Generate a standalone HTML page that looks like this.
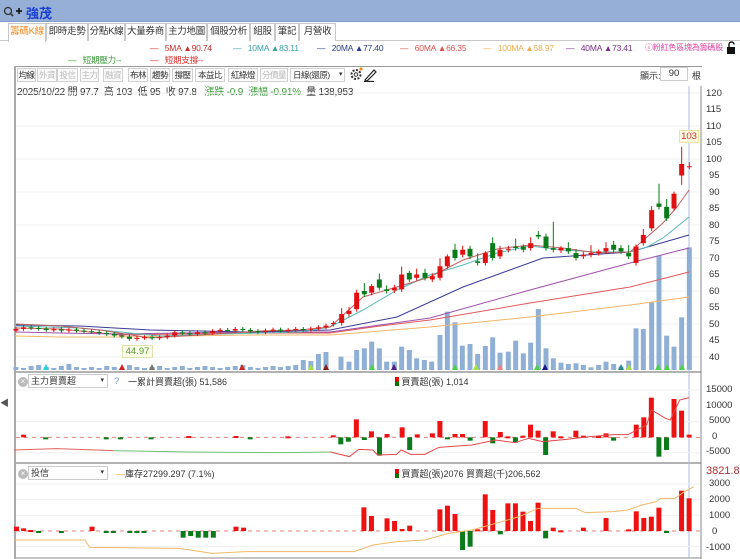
<!DOCTYPE html>
<html><head><meta charset="utf-8">
<style>
*{margin:0;padding:0;box-sizing:border-box}
body{width:740px;height:559px;overflow:hidden;background:#fff;font-family:"Liberation Sans","Noto Sans CJK TC",sans-serif;font-size:11px;color:#333;position:relative}
.a{position:absolute;white-space:nowrap}
.top{left:0;top:0;width:740px;height:22px;background:#95afd7;border-bottom:1px solid #7f9cc8}
.tab{position:absolute;top:23px;height:18px;border:1px solid #c8c8c8;border-bottom:none;font-size:9.5px;line-height:16px;text-align:center;color:#333;background:#fff;white-space:nowrap;overflow:hidden;letter-spacing:-0.3px}
.tb{position:absolute;top:68px;height:14px;border:1px solid #d0d0d0;font-size:8.5px;line-height:12px;text-align:center;background:#fafafa;color:#333;white-space:nowrap;overflow:hidden;letter-spacing:-0.5px}
.tb.g{color:#bbb}
.yl{position:absolute;left:706px;font-size:9.5px;color:#333}
.lg{position:absolute;top:43px;font-size:8.5px;white-space:nowrap;letter-spacing:-0.2px}
</style></head><body>
<div class="a top"></div>
<svg class="a" style="left:2px;top:5px" width="22" height="14"><circle cx="6" cy="6" r="3.5" fill="none" stroke="#333" stroke-width="1.3"/><line x1="8.5" y1="8.5" x2="11" y2="11" stroke="#333" stroke-width="1.6"/><line x1="14" y1="6" x2="20" y2="6" stroke="#111" stroke-width="1.6"/><line x1="17" y1="3" x2="17" y2="9" stroke="#111" stroke-width="1.6"/></svg>
<div class="a" style="left:26px;top:3px;font-size:13px;color:#1a3fd0;font-weight:bold">強茂</div>
<div class="a" style="left:0;top:40px;width:740px;height:1px;background:#c8c8c8"></div>
<div class="tab" style="left:8px;width:38px;color:#f08a1c;height:19px">籌碼K線</div>
<div class="tab" style="left:46px;width:42px">即時走勢</div>
<div class="tab" style="left:88px;width:37px">分點K線</div>
<div class="tab" style="left:125px;width:41px">大量券商</div>
<div class="tab" style="left:166px;width:41px">主力地圖</div>
<div class="tab" style="left:207px;width:43px">個股分析</div>
<div class="tab" style="left:250px;width:25px">組股</div>
<div class="tab" style="left:275px;width:24px">筆記</div>
<div class="tab" style="left:299px;width:37px">月營收</div>

<div class="lg" style="left:150px;color:#c9302c">—&nbsp;&nbsp;&nbsp;5MA ▲90.74</div>
<div class="lg" style="left:233px;color:#3aa0a8">—&nbsp;&nbsp;&nbsp;10MA ▲83.11</div>
<div class="lg" style="left:317px;color:#2b3e8c">—&nbsp;&nbsp;&nbsp;20MA ▲77.40</div>
<div class="lg" style="left:400px;color:#d9534f">—&nbsp;&nbsp;&nbsp;60MA ▲66.35</div>
<div class="lg" style="left:483px;color:#f0ad4e">—&nbsp;&nbsp;&nbsp;100MA ▲58.97</div>
<div class="lg" style="left:566px;color:#7b2f8a">—&nbsp;&nbsp;&nbsp;40MA ▲73.41</div>
<div class="lg" style="top:42px;left:645px;font-size:8px;color:#e040a0">ⓘ粉紅色區塊為籌碼股</div>
<svg class="a" style="left:725px;top:41px" width="14" height="14"><rect x="2" y="6" width="8" height="7" fill="#111"/><path d="M4 6V3.5a2.5 2.5 0 0 1 5 0" fill="none" stroke="#111" stroke-width="1.4"/></svg>
<div class="lg" style="top:54px;left:68px;color:#3a9a3a">—&nbsp;&nbsp;&nbsp;短期壓力--</div>
<div class="lg" style="top:54px;left:150px;color:#d9302c">—&nbsp;&nbsp;&nbsp;短期支撐--</div>

<div class="a" style="left:14px;top:66px;width:688px;height:1px;background:#999"></div>
<div class="a" style="left:14px;top:66px;width:2px;height:493px;background:#aaa"></div>
<div class="a" style="left:0;top:396px;font-size:9px;color:#555">◀</div>

<div class="tb" style="left:17px;width:19px">均線</div>
<div class="tb g" style="left:37px;width:20px">外資</div>
<div class="tb g" style="left:57px;width:21px">投信</div>
<div class="tb g" style="left:80px;width:19px">主力</div>
<div class="tb g" style="left:103px;width:20px">融資</div>
<div class="tb" style="left:128px;width:20px">布林</div>
<div class="tb" style="left:150px;width:20px">趨勢</div>
<div class="tb" style="left:172px;width:21px">撐壓</div>
<div class="tb" style="left:195px;width:30px">本益比</div>
<div class="tb" style="left:228px;width:30px">紅綠燈</div>
<div class="tb g" style="left:260px;width:28px">分價量</div>
<div class="tb" style="left:290px;width:55px;text-align:left;padding-left:2px;background:#fff">日線(還原) <span style="font-size:7px;float:right;padding-right:2px">▾</span></div>
<svg class="a" style="left:349px;top:67px" width="28" height="15"><circle cx="7" cy="7.5" r="4.5" fill="none" stroke="#333" stroke-width="2" stroke-dasharray="2 1.5"/><circle cx="7" cy="7.5" r="1.8" fill="none" stroke="#333"/><circle cx="12" cy="2" r="1.6" fill="#f08a1c"/><path d="M16 13 L25 3 L27 5 L18 14 Z M15 14.5h10" fill="none" stroke="#222" stroke-width="1.2"/></svg>
<div class="a" style="left:640px;top:69px;font-size:9px">顯示:</div>
<div class="a" style="left:660px;top:67px;width:28px;height:14px;border:1px solid #ccc;font-size:9.5px;text-align:center;line-height:12px">90</div>
<div class="a" style="left:692px;top:69px;font-size:9px">根</div>
<div class="a" style="left:17px;top:83px;font-size:10px;color:#333;letter-spacing:-0.2px">2025/10/22 開 97.7&nbsp; 高 103&nbsp; 低 95&nbsp; 收 97.8 &nbsp; <span style="color:#3a9a3a">漲跌 -0.9&nbsp; 漲幅 -0.91%</span> &nbsp;量 138,953</div>

<svg id="c" class="a" style="left:0;top:0" width="740" height="559"></svg>

<div class="yl" style="top:88px">120</div><div class="yl" style="top:104px">115</div>
<div class="yl" style="top:121px">110</div><div class="yl" style="top:137px">105</div>
<div class="yl" style="top:154px">100</div><div class="yl" style="top:170px;left:709px">95</div>
<div class="yl" style="top:187px;left:709px">90</div><div class="yl" style="top:203px;left:709px">85</div>
<div class="yl" style="top:220px;left:709px">80</div><div class="yl" style="top:236px;left:709px">75</div>
<div class="yl" style="top:253px;left:709px">70</div><div class="yl" style="top:269px;left:709px">65</div>
<div class="yl" style="top:286px;left:709px">60</div><div class="yl" style="top:302px;left:709px">55</div>
<div class="yl" style="top:319px;left:709px">50</div><div class="yl" style="top:335px;left:709px">45</div>
<div class="yl" style="top:352px;left:709px">40</div>
<div class="a" style="left:679px;top:130px;width:20px;height:13px;background:#fffbe0;border:1px solid #eee2a0;color:#d9302c;font-size:9.5px;text-align:center;line-height:11px">103</div>
<div class="a" style="left:122px;top:345px;width:31px;height:13px;background:#fbfde8;border:1px solid #dde2b0;color:#5a9a3a;font-size:9.5px;text-align:center;line-height:11px">44.97</div>

<div class="yl" style="top:384px">15000</div><div class="yl" style="top:400px">10000</div>
<div class="yl" style="top:415px;left:709px">5000</div><div class="yl" style="top:431px;left:712px">0</div>
<div class="yl" style="top:446px">-5000</div>
<div class="a" style="left:706px;top:465px;font-size:11px;color:#b03030">3821.8</div>
<div class="yl" style="top:478px;left:709px">3000</div><div class="yl" style="top:494px;left:709px">2000</div>
<div class="yl" style="top:510px;left:709px">1000</div><div class="yl" style="top:526px;left:712px">0</div>
<div class="yl" style="top:542px">-1000</div>

<div class="a" style="left:18px;top:377px;width:10px;height:10px;border-radius:50%;background:#bbb;color:#fff;font-size:8px;line-height:10px;text-align:center">×</div>
<div class="a" style="left:28px;top:374px;width:80px;height:14px;border:1px solid #ccc;font-size:9px;line-height:12px;padding-left:2px">主力買賣超<span style="float:right;font-size:7px;padding-right:3px">▾</span></div>
<div class="a" style="left:114px;top:376px;font-size:9.5px;color:#7a9ad0">?</div>
<div class="a" style="left:128px;top:375px;font-size:9px">一累計買賣超(張) 51,586</div>
<div class="a" style="left:395px;top:375px;font-size:9px"><span style="display:inline-block;width:4px;height:9px;background:linear-gradient(#e00 50%,#070 50%);vertical-align:-1px"></span> 買賣超(張) 1,014</div>

<div class="a" style="left:18px;top:469px;width:10px;height:10px;border-radius:50%;background:#bbb;color:#fff;font-size:8px;line-height:10px;text-align:center">×</div>
<div class="a" style="left:28px;top:466px;width:80px;height:14px;border:1px solid #ccc;font-size:9px;line-height:12px;padding-left:2px">投信<span style="float:right;font-size:7px;padding-right:3px">▾</span></div>
<div class="a" style="left:116px;top:467px;font-size:9px"><span style="color:#f0a030">—</span>庫存27299.297 (7.1%)</div>
<div class="a" style="left:395px;top:467px;font-size:9px"><span style="display:inline-block;width:4px;height:9px;background:linear-gradient(#e00 50%,#070 50%);vertical-align:-1px"></span> 買賣超(張)2076 買賣超(千)206,562</div>

<script>
var s='';
function L(x1,y1,x2,y2,c,w){s+='<line x1="'+x1+'" y1="'+y1+'" x2="'+x2+'" y2="'+y2+'" stroke="'+c+'" stroke-width="'+(w||1)+'"/>';}
function R(x,y,w,h,c){s+='<rect x="'+x+'" y="'+y+'" width="'+w+'" height="'+h+'" fill="'+c+'"/>';}
function P(pts,c,w){s+='<polyline points="'+pts.map(function(p){return p[0]+','+p[1]}).join(' ')+'" fill="none" stroke="'+c+'" stroke-width="'+(w||1)+'"/>';}
for(var p=40;p<=120;p+=10){var y=93+(120-p)*3.3;L(16,y,700,y,'#f0f0f0');}
L(701,86,701,559,'#888');L(16,372,701,372,'#666');L(16,463,701,463,'#666');L(16,558,701,558,'#888');
L(689,86,689,558,'#a8bce0');
function py(p){return 93+(120-p)*3.3;}
var vx=[],vh=[];
for(var i=0;i<42;i++){vx.push(16+i*7.56);var h=[3,2,4,5,3,2,4,6,3,2,3,2,4,3,2,5,3,2,3,4,2,3,4,2,3,4,3,2,3,4,5,3,2,3,4,3,4,5,10,9,16,18][i];vh.push(h);}
var tv=[[33,800],[57,815],[80,780],[103,775],[125,755],[148,775],[170,815],[193,815],[215,770],[238,780],[260,805],[283,810],[305,815],[330,735],[352,665],[375,697],[397,767],[420,762],[443,792],[466,768],[488,742],[510,788],[535,785],[557,752],[580,790],[602,758],[625,657],[648,775],[670,805],[693,818],[715,822],[738,820],[760,825],[783,832],[806,825],[828,815],[851,822],[873,830],[896,812],[918,715],[940,717],[965,637],[987,497],[1010,737],[1032,770],[1055,682],[1078,472]];
tv.forEach(function(v){vx.push(330+v[0]/3);vh.push(370-(90+v[1]/3));});
for(var i=0;i<vx.length;i++)R(vx[i]-2.5,370-vh[i],5,vh[i],'#8fb0d4');
[[46,'#2bd0e0'],[122,'#d02020'],[152,'#a0e040'],[152,'#777'],[242,'#d02020'],[311,'#a0e040'],[326,'#8b1a1a'],[372,'#4ad04a'],[394,'#5a1a8a'],[455,'#4ad04a'],[476,'#a0e040'],[500,'#f08080'],[537,'#4ad04a'],[545,'#1a1a8a'],[621,'#2a8a8a'],[629,'#a0e040'],[658,'#4ad04a'],[667,'#4ad04a'],[682,'#4ad04a']].forEach(function(m){s+='<polygon points="'+(m[0]-3)+',370 '+(m[0]+3)+',370 '+m[0]+',364" fill="'+m[1]+'"/>';});
var early=function(y0,y1){return [[16,y0],[60,y0+1],[120,y1+2],[180,y1+1],[250,y1],[330,y1]];};
P(early(336,335).concat([[430,327],[530,317],[630,305],[689,297]]),'#f2b766');
P(early(328,333).concat([[380,326],[430,320],[530,303],[630,287],[689,272]]),'#e05a5a');
P(early(332,332).concat([[380,325],[430,318],[530,290],[630,263],[689,248]]),'#a050a8');
P([[16,325],[80,326],[150,330],[250,332],[330,330],[397,317],[463,287],[543,258],[630,252],[689,235]],'#3c3c9a');
P([[16,326],[80,328],[130,333],[160,336],[220,334],[300,332],[330,327],[363,310],[397,290],[430,275],[463,265],[497,253],[530,246],[563,250],[597,252],[630,252],[647,247],[663,238],[689,217]],'#5ab8b8');
P([[16,324],[60,326],[100,330],[150,338],[200,335],[260,331],[300,330],[330,327],[363,297],[397,287],[430,277],[463,260],[497,249],[530,245],[563,248],[597,253],[630,252],[647,237],[663,223],[677,207],[689,190]],'#c06060');
var cd=[];var base=[48.5,49,48.8,48.6,48.2,48.4,48,48.3,48,47.8,47.6,47.3,47,46.5,46.2,45.5,45.8,46,45.7,46,46.5,47.5,47.2,47,47.5,47.3,47.8,48.2,48,48.5,48.2,47.8,47.5,48,48.3,48,48.2,48.5,48.3,48.6,49,49.5];
for(var i=0;i<42;i++){var o=i?base[i-1]:48,c=base[i];cd.push([16+i*7.56,o,c,Math.max(o,c)+0.6,Math.min(o,c)-0.6]);}
var t=[[10,50,50.3],[35,50.3,53],[57,53,54],[80,54.5,59.5],[103,60,59],[125,59.5,61.5],[148,63.5,61],[170,60.5,60],[193,60.2,61],[215,60.5,65],[238,65.5,63.5],[260,64,65],[285,65.5,64],[307,63.5,64.5],[330,64,67.5],[352,67.5,70.5],[375,72.5,70],[398,71,72.5],[420,72.8,70.5],[443,69,68.5],[466,68.5,71.5],[488,74.5,70],[510,70.5,72.5],[535,72.5,72.8],[557,73.5,73],[580,73.5,72.5],[602,73,74.5],[625,77,76.5],[648,76.5,73],[670,73,72.5],[693,72.3,73],[715,73,72],[738,71.5,70],[760,70.5,71],[783,71,71.5],[806,71.5,72],[828,72,73],[851,74,72.5],[873,73,72],[896,71.5,70.5],[918,68.5,73.5],[940,74.5,77],[965,79,84.5],[987,86.5,85.5],[1010,85.5,82],[1032,85,89.5],[1055,95,98.5],[1078,97.7,97.8]];
t.forEach(function(v,k){var o=v[1],c=v[2];var hi=Math.max(o,c)+(k==46?5.2:[1,3,2,1.5,4][k%5]*0.6),lo=Math.min(o,c)-(k==46?2.8:0.8);if(k==43)hi=92.5;if(k==29)hi=81;cd.push([330+v[0]/3,o,c,hi,lo]);});
cd.forEach(function(d){var x=d[0],o=d[1],c=d[2];var col=c>=o?'#e01010':'#0a7a1a';L(x,py(d[3]),x,py(d[4]),col);var y1=py(Math.max(o,c)),y2=py(Math.min(o,c));R(x-2.5,y1,5,Math.max(1,y2-y1),col);});
function X(z){return z*0.472;}function Y(z){return 360+z/3;}
L(16,Y(90),700,Y(90),'#f0f0f0');L(16,Y(185),700,Y(185),'#f0f0f0');L(16,Y(278),700,Y(278),'#f0f0f0');
s+='<line x1="16" y1="'+Y(232)+'" x2="700" y2="'+Y(232)+'" stroke="#e08080" stroke-dasharray="4 4"/>';
var b1=[[50,224],[97,236],[225,236],[255,236],[320,235],[400,228],[500,228],[530,235],[610,229],[706,226],[722,253],[738,245],[755,178],[772,240],[787,214],[804,287],[820,222],[852,202],[868,270],[884,223],[916,220],[932,183],[948,236],[964,222],[980,222],[996,242],[1028,183],[1044,250],[1060,216],[1076,229],[1092,248],[1108,227],[1124,194],[1140,212],[1156,285],[1172,214],[1188,229],[1220,212],[1236,227],[1268,228],[1284,220],[1300,242],[1348,194],[1364,172],[1380,113],[1396,290],[1412,270],[1428,117],[1444,152],[1460,224]];
b1.forEach(function(b){var up=b[1]<232;var y1=Y(Math.min(b[1],232)),y2=Y(Math.max(b[1],232));R(X(b[0])-2.5,y1,5,Math.max(2,y2-y1),up?'#ee1111':'#0a7a1a');});
P([[30,270],[120,266],[240,272]].map(function(p){return [X(p[0]),Y(p[1])]}),'#e06060');
P([[240,272],[400,276],[600,278],[700,276]].map(function(p){return [X(p[0]),Y(p[1])]}),'#70c070');
P([[700,276],[740,290],[760,268],[790,270],[800,285],[840,283],[850,270],[870,283],[900,283],[930,262],[1000,255],[1050,240],[1090,248],[1120,235],[1150,245],[1200,238],[1250,230],[1300,224],[1330,224],[1370,195],[1380,150],[1410,175],[1420,180],[1440,120],[1460,113]].map(function(p){return [X(p[0]),Y(p[1])]}),'#e04848');
[418,466,560].forEach(function(z){L(16,Y(z),700,Y(z),'#f0f0f0');});L(16,Y(372),700,Y(372),'#f0f0f0');
s+='<line x1="16" y1="'+Y(513)+'" x2="700" y2="'+Y(513)+'" stroke="#e08080" stroke-dasharray="4 4"/>';
var b2=[[35,500],[50,505],[65,510],[82,516],[130,516],[195,500],[225,518],[240,518],[275,517],[290,517],[305,517],[388,533],[404,528],[420,533],[436,533],[452,533],[500,500],[516,503],[771,442],[787,468],[820,475],[836,483],[852,507],[868,497],[932,448],[948,437],[964,462],[980,570],[996,560],[1012,508],[1028,403],[1044,450],[1060,523],[1076,430],[1092,430],[1108,455],[1124,483],[1140,428],[1156,535],[1172,503],[1188,511],[1236,503],[1284,474],[1332,508],[1348,454],[1364,474],[1380,470],[1396,443],[1412,516],[1444,392],[1460,415]];
b2.forEach(function(b){var up=b[1]<513;var y1=Y(Math.min(b[1],513)),y2=Y(Math.max(b[1],513));R(X(b[0])-2.5,y1,5,Math.max(2,y2-y1),up?'#ee1111':'#0a7a1a');});
P([[30,540],[180,540],[190,562],[380,565],[450,580],[520,575],[750,575],[790,555],[840,545],[900,540],[950,520],[1000,510],[1050,490],[1100,470],[1140,445],[1220,445],[1240,458],[1300,455],[1330,450],[1360,435],[1390,425],[1400,415],[1430,415],[1450,395],[1470,380]].map(function(p){return [X(p[0]),Y(p[1])]}),'#f0b868');
document.getElementById('c').innerHTML=s;
</script>
</body></html>
